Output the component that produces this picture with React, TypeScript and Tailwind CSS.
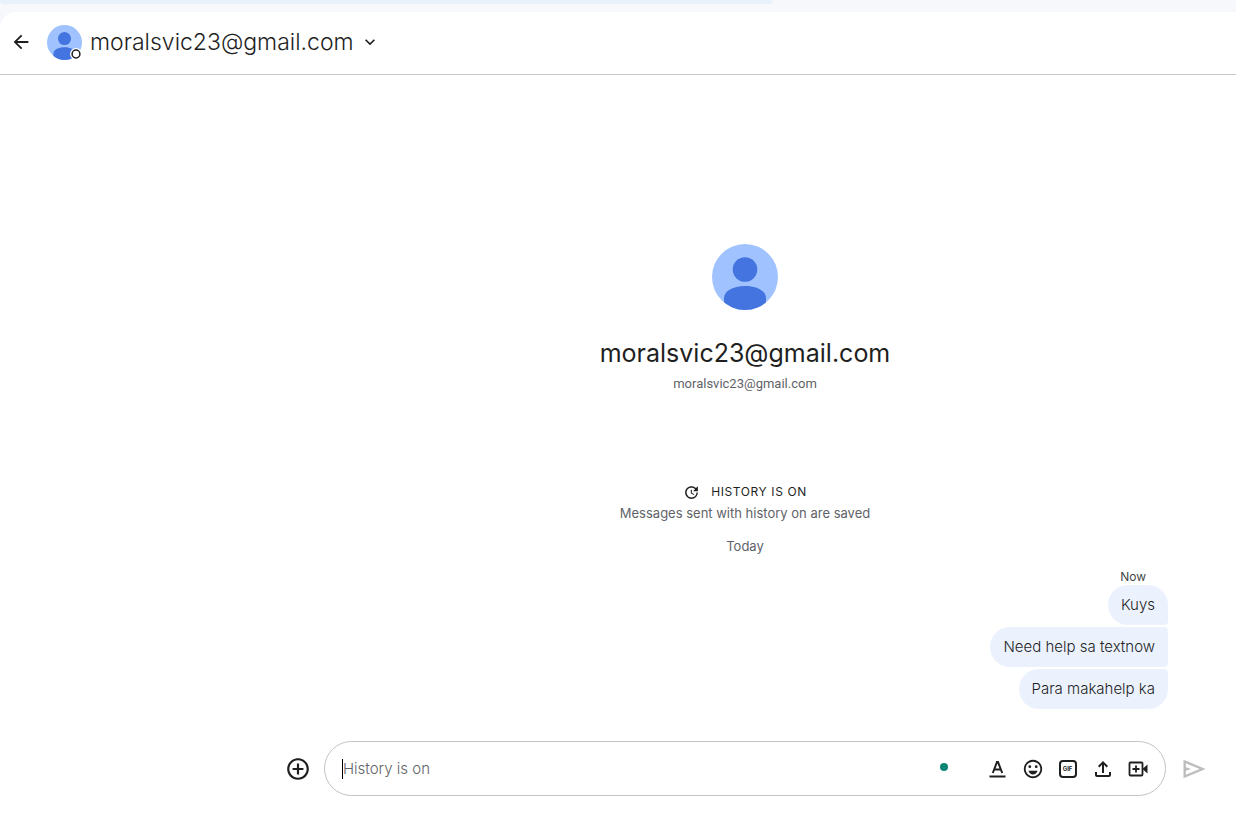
import type { ReactNode } from 'react';
import {
  MdAddCircleOutline,
  MdArrowBack,
  MdExpandMore,
  MdOutlineEmojiEmotions,
  MdOutlineFileUpload,
  MdUpdate,
} from 'react-icons/md';

const EMAIL = 'moralsvic23@gmail.com';

const messages = [
  { text: 'Kuys', shape: 'rounded-tr-[20px] rounded-br-sm' },
  { text: 'Need help sa textnow', shape: 'rounded-r-sm' },
  { text: 'Para makahelp ka', shape: 'rounded-tr-sm rounded-br-[20px]' },
];

export default function App() {
  return (
    <div className="flex min-h-screen flex-col bg-[#f6f8fc] font-['Inter','Liberation_Sans',sans-serif] text-[#1f1f1f]">
      {/* Bottom edge of the search bar */}
      <div className="h-3">
        <div className="h-1 w-5/8 rounded-b-lg bg-[#e9f1fb]" />
      </div>

      <div className="flex flex-1 flex-col rounded-tl-2xl bg-white">
        <header className="flex h-[63px] items-center border-b border-[#c7c7c7] pb-0.5 pl-2.5">
          <button type="button" aria-label="Back">
            <MdArrowBack size={22} />
          </button>
          <div className="relative ml-[15px]">
            <Avatar className="size-[35px]" />
            {/* Away status */}
            <svg viewBox="0 0 12 12" className="absolute right-0 bottom-0 size-3">
              <circle cx="6" cy="6" r="6" fill="#fff" />
              <circle cx="6" cy="6" r="3.9" fill="none" stroke="#1f1f1f" strokeWidth="1.5" />
            </svg>
          </div>
          <button type="button" className="ml-2 flex items-center gap-1.5">
            <h1 className="text-[23px] leading-8 font-light">{EMAIL}</h1>
            <MdExpandMore size={20} />
          </button>
        </header>

        <main className="flex flex-1 flex-col justify-end pl-[254px]">
          {/* Conversation intro */}
          <section className="flex flex-col items-center">
            <Avatar className="size-[66px]" />
            <h2 className="mt-[25px] text-[25px] leading-9">{EMAIL}</h2>
            <p className="mt-[3px] font-['Roboto',sans-serif] text-[13px] leading-5 text-[#5f6368]">
              {EMAIL}
            </p>
            <div className="mt-[88px] flex items-center gap-[11px] text-xs leading-5 tracking-wider">
              <MdUpdate size={17} />
              HISTORY IS ON
            </div>
            <p className="mt-px text-[13px] leading-5 text-[#5f6368]">
              Messages sent with history on are saved
            </p>
            <p className="mt-[13px] text-[13px] leading-5 text-[#5f6368]">Today</p>
          </section>

          {/* Messages */}
          <section className="mt-[13px] flex flex-col items-end pr-[68px]">
            <time className="pr-[22px] text-xs leading-4 text-[#444746]">Now</time>
            <div className="flex flex-col items-end gap-0.5">
              {messages.map(({ text, shape }) => (
                <p
                  key={text}
                  className={`rounded-l-[20px] bg-[#ebf2fe] px-[13px] py-2 text-[15px] leading-6 font-light ${shape}`}
                >
                  {text}
                </p>
              ))}
            </div>
          </section>

          <Composer />
        </main>
      </div>
    </div>
  );
}

function Composer() {
  return (
    <form className="mt-8 mb-8 flex items-center pr-3.5 pl-[18px]">
      <button type="button" aria-label="Add" className="flex w-[52px] justify-center">
        <MdAddCircleOutline size={26} />
      </button>
      <div className="flex h-[55px] flex-1 items-center rounded-full border border-[#c0c4c4] pr-2.5 pl-[17px]">
        <span className="h-5 w-px bg-black" />
        <input
          type="text"
          aria-label="Message"
          placeholder="History is on"
          className="h-6 min-w-0 flex-1 text-[15px] font-light outline-none placeholder:text-[#5f6368]"
        />
        <span className="mr-8 mb-1 size-2 rounded-full bg-[#0b8575]" />
        <ToolButton label="Format">
          <svg viewBox="0 0 24 24" className="size-6" fill="none" stroke="currentColor">
            <path d="M3.5 19.5h16" strokeWidth="2" />
            <path d="M6.8 16 11 5h1l4.2 11M8.4 12.5h6.2" strokeWidth="2" />
          </svg>
        </ToolButton>
        <ToolButton label="Emoji">
          <MdOutlineEmojiEmotions size={22} />
        </ToolButton>
        <ToolButton label="GIF">
          <span className="flex size-[18px] items-center justify-center rounded border-2 border-current text-[6px] leading-none font-bold">
            GIF
          </span>
        </ToolButton>
        <ToolButton label="Upload">
          <MdOutlineFileUpload size={24} />
        </ToolButton>
        <ToolButton label="Video meeting">
          <svg viewBox="0 0 24 24" className="size-6" fill="none" stroke="currentColor">
            <rect x="3.5" y="5.5" width="13" height="13" rx="1" strokeWidth="1.8" />
            <path d="M10 8.5v7M6.5 12h7" strokeWidth="1.8" />
            <path d="m17 11.5 4.5-4v9l-4.5-4Z" fill="currentColor" stroke="none" />
          </svg>
        </ToolButton>
      </div>
      <button type="submit" aria-label="Send" className="flex w-14 justify-center text-[#bdbdbd]">
        <svg viewBox="0 0 24 24" className="size-7" fill="currentColor">
          <path d="M3 20V4l19 8-19 8Zm2-3 11.85-5L5 7v3.5l4.5 1.5L5 13.5V17Z" />
        </svg>
      </button>
    </form>
  );
}

function ToolButton({ label, children }: { label: string; children: ReactNode }) {
  return (
    <button type="button" aria-label={label} className="flex w-[35px] items-center justify-center">
      {children}
    </button>
  );
}

function Avatar({ className }: { className: string }) {
  return (
    <svg viewBox="0 0 66 66" className={`overflow-hidden rounded-full ${className}`}>
      <rect width="66" height="66" fill="#a0c3ff" />
      <circle cx="33" cy="25.5" r="12.3" fill="#4374e0" />
      <path d="M12 66V54c0-7 9-12 21-12s21 5 21 12v12Z" fill="#4374e0" />
    </svg>
  );
}
